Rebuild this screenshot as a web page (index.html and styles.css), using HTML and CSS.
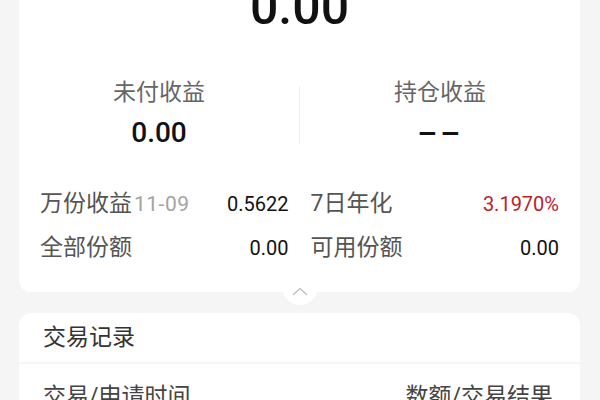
FILE: index.html
```html
<!DOCTYPE html>
<html lang="zh-CN">
<head>
<meta charset="utf-8">
<title>收益详情</title>
<link rel="stylesheet" href="styles.css">
</head>
<body>
<div class="page">
  <section class="card summary">
    <div class="total">0.00</div>
    <div class="stats">
      <div class="stat">
        <div class="stat-label">未付收益</div>
        <div class="stat-value">0.00</div>
      </div>
      <div class="stat-divider"></div>
      <div class="stat">
        <div class="stat-label">持仓收益</div>
        <div class="stat-value"><span class="dash">--</span></div>
      </div>
    </div>
    <div class="details">
      <div class="detail">
        <span class="detail-label">万份收益<span class="detail-date">11-09</span></span>
        <span class="detail-value">0.5622</span>
      </div>
      <div class="detail">
        <span class="detail-label">7日年化</span>
        <span class="detail-value red">3.1970%</span>
      </div>
      <div class="detail">
        <span class="detail-label">全部份额</span>
        <span class="detail-value">0.00</span>
      </div>
      <div class="detail">
        <span class="detail-label">可用份额</span>
        <span class="detail-value">0.00</span>
      </div>
    </div>
    <div class="collapse-tab">
      <svg width="16" height="9" viewBox="0 0 16 9"><polyline points="1.5,7.5 8,1.5 14.5,7.5" fill="none" stroke="#c4c4c4" stroke-width="1.6" stroke-linecap="round" stroke-linejoin="round"/></svg>
    </div>
  </section>

  <section class="records">
    <div class="records-head">交易记录</div>
    <div class="records-body">
      <div class="records-cols">
        <span>交易/申请时间</span>
        <span>数额/交易结果</span>
      </div>
    </div>
  </section>
</div>
</body>
</html>
```

FILE: styles.css
```css
html, body {
  margin: 0;
  padding: 0;
  height: 400px;
  overflow: hidden;
  background: #f5f5f5;
  font-family: Roboto, "Noto Sans CJK SC", sans-serif;
}

.page {
  padding: 0 20px 0 19px;
}

.card {
  background: #ffffff;
}

.summary {
  position: relative;
  margin-top: -18px;
  border-radius: 0 0 12px 12px;
  padding-bottom: 22px;
}

.total {
  font-size: 50px;
  line-height: 50px;
  font-weight: 500;
  color: #111;
  text-align: center;
}

.stats {
  display: flex;
  margin-top: 46px;
}

.stat {
  flex: 1;
  text-align: center;
}

.stat-label {
  font-size: 23px;
  line-height: 30px;
  color: #666;
}

.stat-value {
  margin-top: 7px;
  font-size: 28px;
  line-height: 36px;
  font-weight: 500;
  color: #111;
}

.dash {
  display: inline-block;
  font-weight: 700;
  transform: scaleX(2);
  letter-spacing: 0.5px;
}

.stat-divider {
  width: 1px;
  margin: 8px 0 7px;
  background: #eeeeee;
}

.details {
  display: grid;
  grid-template-columns: 1fr 1fr;
  column-gap: 22px;
  margin-top: 31px;
  padding: 0 21px;
}

.detail {
  display: flex;
  align-items: center;
  justify-content: space-between;
  height: 44px;
}

.detail-label {
  font-size: 23px;
  line-height: 44px;
  color: #555;
  white-space: nowrap;
}

.detail-date {
  margin-left: 2px;
  font-size: 21px;
  letter-spacing: 0.5px;
  color: #a3a3a3;
}

.detail-value {
  font-size: 20px;
  line-height: 44px;
  color: #111;
}

.detail-value.red {
  color: #b8232e;
}

.collapse-tab {
  position: absolute;
  left: 50%;
  bottom: -13px;
  width: 36px;
  height: 36px;
  margin-left: -18px;
  border-radius: 50%;
  background: #ffffff;
  display: flex;
  justify-content: center;
  align-items: flex-start;
  padding-top: 18px;
  box-sizing: border-box;
}

.collapse-tab svg {
  display: block;
}

.records {
  margin-top: 21px;
}

.records-head {
  background: #ffffff;
  border-radius: 12px 12px 0 0;
  height: 49px;
  line-height: 49px;
  padding-left: 24px;
  font-size: 23px;
  color: #333;
}

.records-body {
  margin-top: 2px;
  background: #ffffff;
  min-height: 200px;
}

.records-cols {
  display: flex;
  justify-content: space-between;
  padding: 0 27px 0 24px;
  font-size: 23px;
  line-height: 66px;
  color: #444;
}
```
